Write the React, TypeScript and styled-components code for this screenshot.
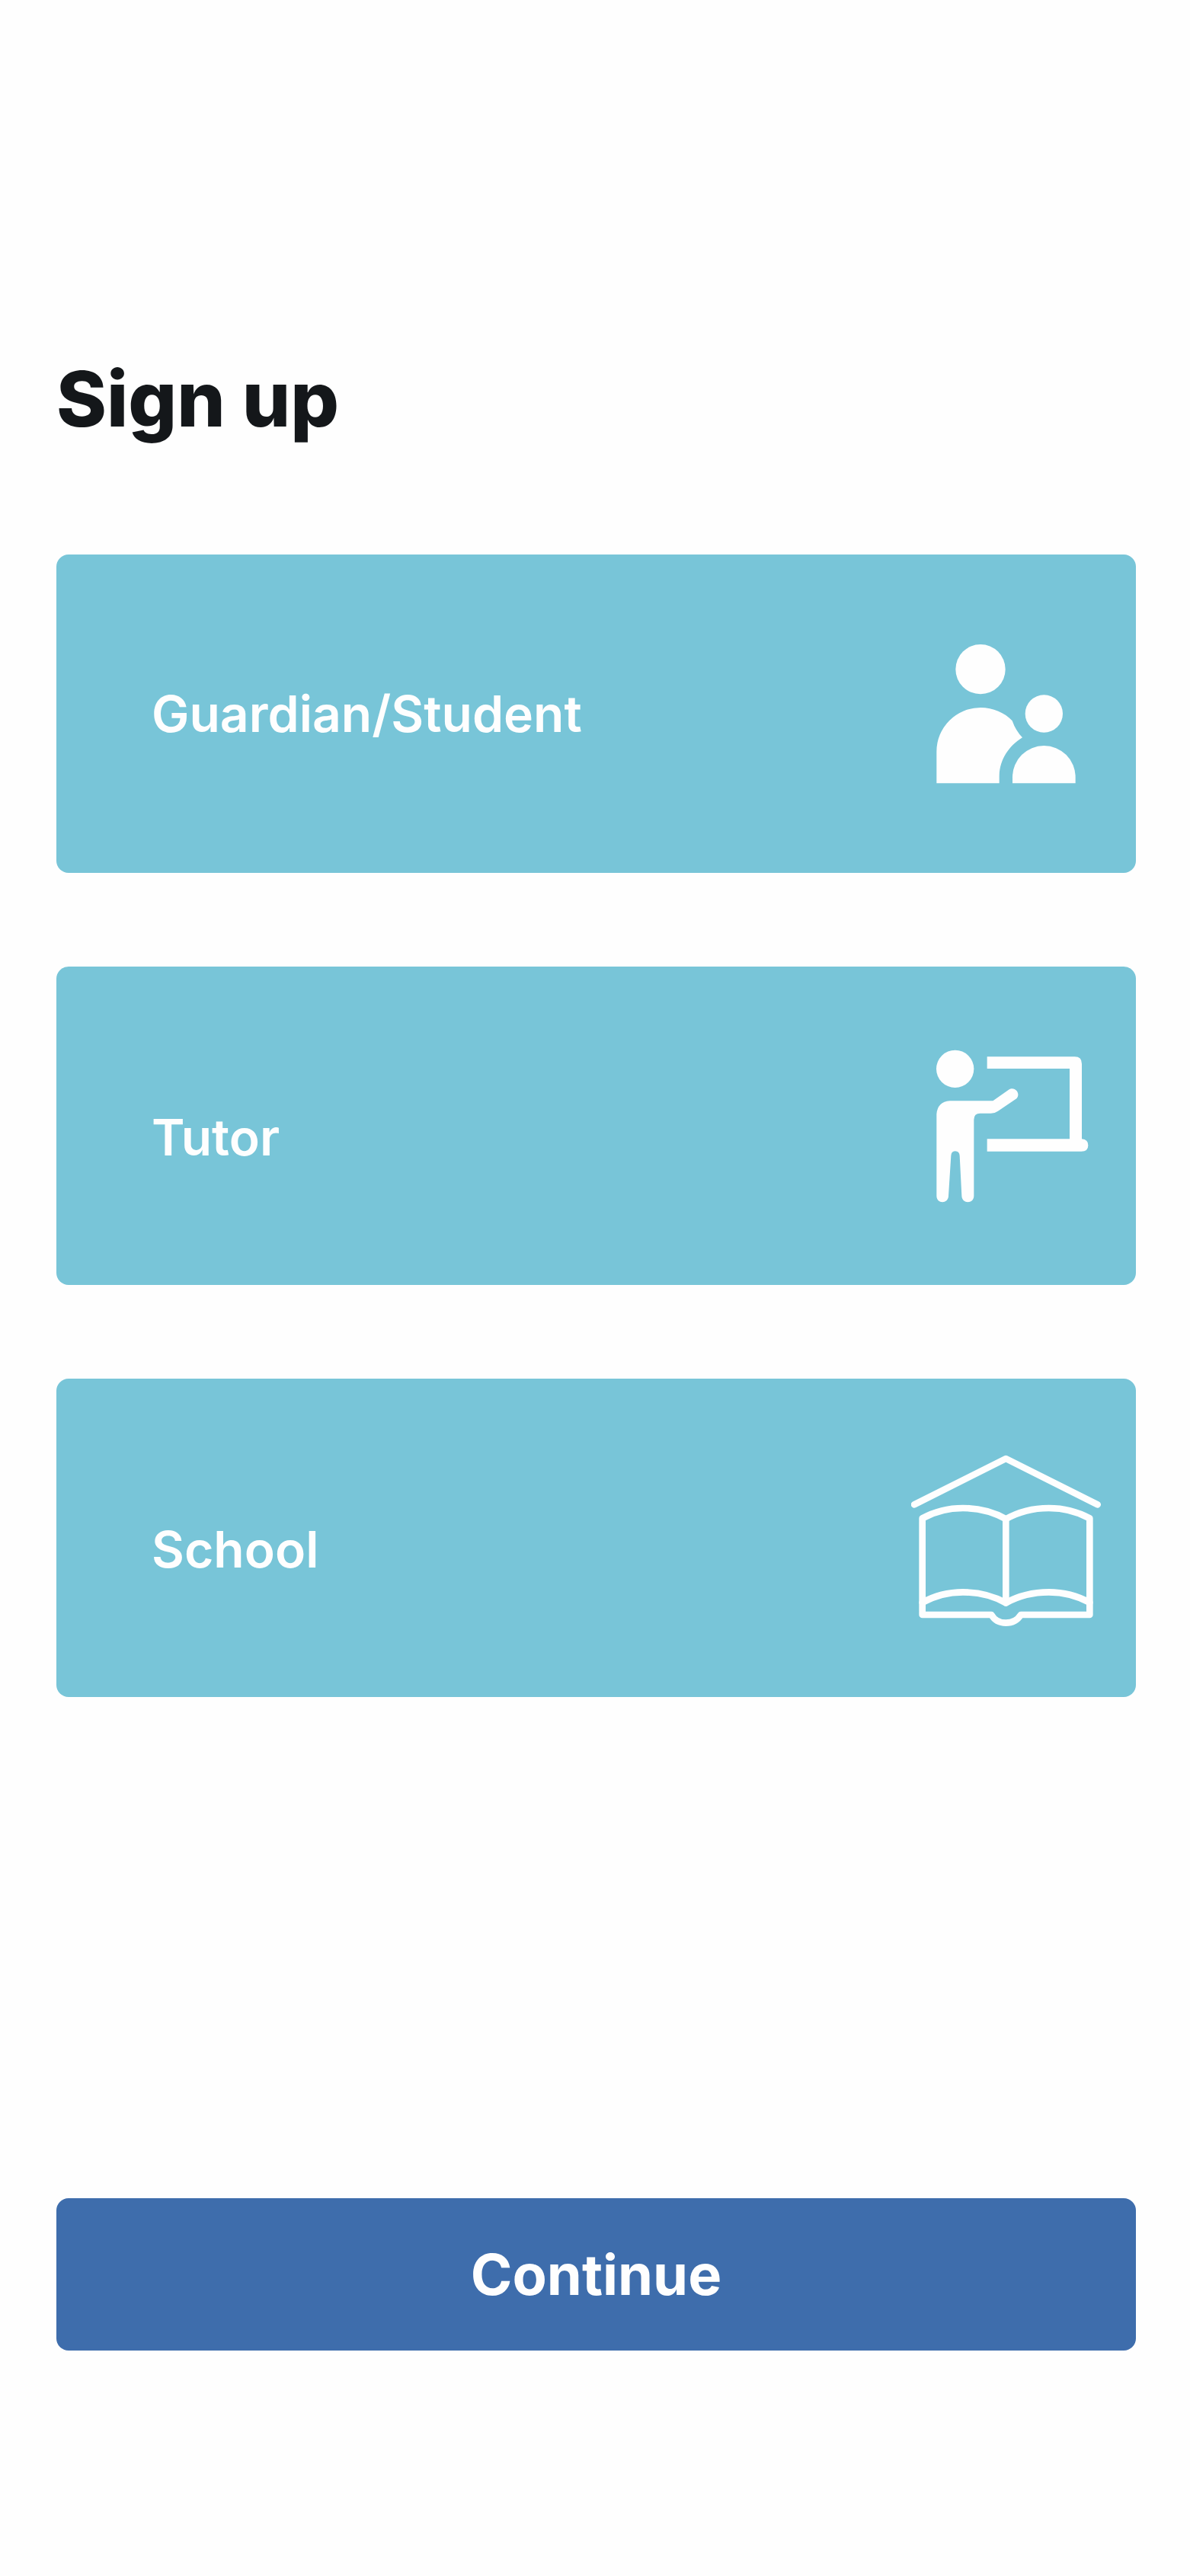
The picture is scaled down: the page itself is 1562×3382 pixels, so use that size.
import React, { useState } from "react";
import styled, { createGlobalStyle } from "styled-components";

const GlobalStyle = createGlobalStyle`
  *, *::before, *::after { box-sizing: border-box; }
  body {
    margin: 0;
    background: #fefefe;
    font-family: Inter, "Liberation Sans", sans-serif;
  }
`;

const Page = styled.main`
  display: flex;
  flex-direction: column;
  min-height: 100vh;
  padding: 460px 71px 296px 74px;
`;

const Title = styled.h1`
  margin: 0 0 140px;
  color: #14171a;
  font-size: 100px;
  font-weight: 800;
  line-height: 128px;
`;

const RoleList = styled.div`
  display: flex;
  flex-direction: column;
  gap: 123px;
  margin-bottom: 123px;
`;

const RoleCard = styled.button`
  display: flex;
  align-items: center;
  justify-content: space-between;
  width: 100%;
  min-height: 418px;
  padding: 0 45px 0 125px;
  border: 0;
  border-radius: 16px;
  background: #78c5d8;
  color: #fefefe;
  font: inherit;
  text-align: left;
  cursor: pointer;
`;

const RoleLabel = styled.span<{ $lowered: boolean }>`
  padding-top: ${({ $lowered }) => ($lowered ? "30px" : "0")};
  font-size: 66px;
  font-weight: 600;
  line-height: 76px;
`;

const RoleIcon = styled.svg`
  flex: none;
  width: 250px;
  height: 240px;
  fill: #fefefe;
`;

const ContinueButton = styled.button`
  width: 100%;
  min-height: 200px;
  margin-top: auto;
  border: 0;
  border-radius: 16px;
  background: #3e6dac;
  color: #fefefe;
  font-family: inherit;
  font-size: 74px;
  font-weight: 700;
  line-height: 88px;
  cursor: pointer;
`;

const GuardianIcon = () => (
  <RoleIcon viewBox="48 51 750 720" aria-hidden="true">
    <circle cx="321" cy="236" r="98" />
    <circle cx="571" cy="411" r="74" />
    <path d="M148 685V560A173 173 0 0 1 321 387C371 387 416 407 446 439Q460 479 486 505C430 540 395 595 395 660V685Z" />
    <path d="M447 685V661A124 124 0 0 1 695 661V685Z" />
  </RoleIcon>
);

const TutorIcon = () => (
  <RoleIcon viewBox="48 54 750 720" aria-hidden="true">
    <circle cx="221" cy="190" r="74" />
    <path d="M347 142H692Q720 142 720 170V466Q745 468 745 491Q745 515 718 515H347V466H672V189H347Z" />
    <path d="M200 316H370L432 272C456 256 481 286 463 307L390 356Q378 365 362 365H320Q295 365 295 390V690C295 723 248 723 247 690L239 532Q238 514 221 514Q206 514 205 532L195 690C194 723 148 723 148 690V368Q152 320 200 316Z" />
  </RoleIcon>
);

const SchoolIcon = () => (
  <RoleIcon viewBox="108 57 750 720" aria-hidden="true">
    <g fill="none" stroke="#fefefe" strokeWidth="26" strokeLinecap="round" strokeLinejoin="round">
      <path d="M120 286L481 105L842 286" />
      <path d="M152 340Q225 300 312 300Q405 300 481 343Q557 300 650 300Q737 300 811 340V720H540Q520 752 481 752Q442 752 424 720H152Z" />
      <path d="M481 343V673" />
      <path d="M152 672Q225 631 312 631Q405 631 481 673Q557 631 650 631Q737 631 811 672" />
    </g>
  </RoleIcon>
);

const roles = [
  { name: "Guardian/Student", Icon: GuardianIcon, lowered: false },
  { name: "Tutor", Icon: TutorIcon, lowered: true },
  { name: "School", Icon: SchoolIcon, lowered: true },
];

export default function App() {
  const [selected, setSelected] = useState<string | null>(null);

  return (
    <>
      <GlobalStyle />
      <Page>
        <Title>Sign up</Title>
        <RoleList>
          {roles.map(({ name, Icon, lowered }) => (
            <RoleCard
              key={name}
              type="button"
              aria-pressed={selected === name}
              onClick={() => setSelected(name)}
            >
              <RoleLabel $lowered={lowered}>{name}</RoleLabel>
              <Icon />
            </RoleCard>
          ))}
        </RoleList>
        <ContinueButton type="button">Continue</ContinueButton>
      </Page>
    </>
  );
}
